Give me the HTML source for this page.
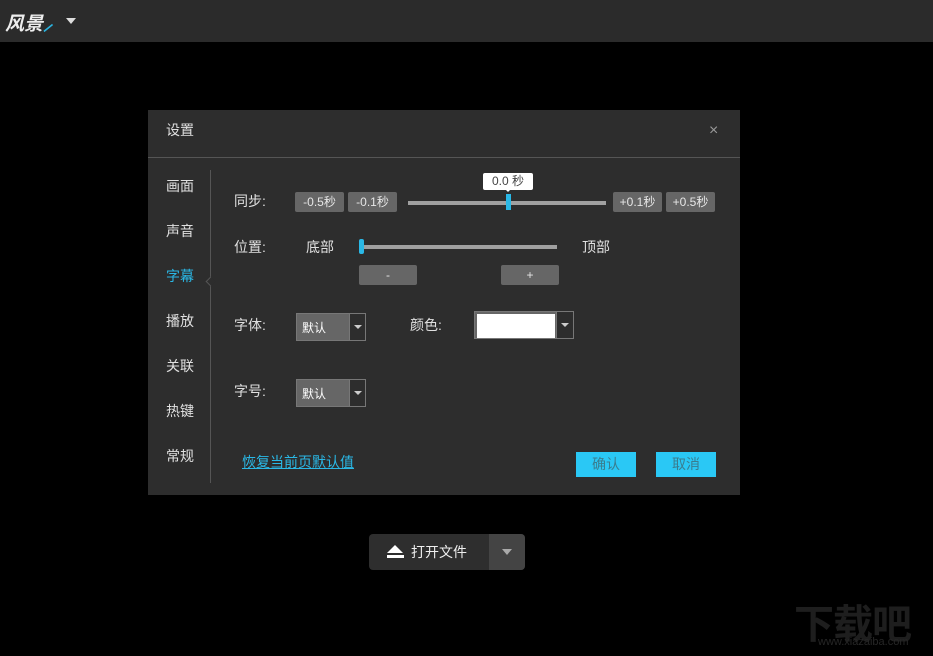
<!DOCTYPE html>
<html><head><meta charset="utf-8"><style>
*{margin:0;padding:0;box-sizing:border-box}
body{width:933px;height:656px;background:#000;position:relative;overflow:hidden;font-family:"Liberation Sans","Noto Sans CJK SC",sans-serif;font-size:14px;color:#ddd}
.a{position:absolute}
.top{left:0;top:0;width:933px;height:42px;background:#2b2b2b}
.dlg{left:148px;top:110px;width:592px;height:385px;background:#2d2d2d}
.btn{position:absolute;background:#666;color:#e6e6e6;font-size:12px;text-align:center;line-height:20px;height:20px;border-radius:2px}
.bar{position:absolute;height:4px;background:#a0a0a0}
.nav{position:absolute;left:166px;font-size:14px;color:#e0e0e0}
.lab{position:absolute;font-size:14px;color:#e0e0e0}
.sel{position:absolute;width:70px;height:28px;border:1px solid #777;background:#666}
.sel span{position:absolute;left:5px;top:5px;font-size:12px;color:#fff}
.sel i{position:absolute;right:0;top:0;width:16px;height:26px;background:#2d2d2d;border-left:1px solid #777}
.sel i:after{content:"";position:absolute;left:4px;top:11px;border:4px solid transparent;border-top:4px solid #ccc}
.ok{position:absolute;top:452px;width:60px;height:25px;background:#2ac8f5;color:#3a7d8f;text-align:center;line-height:24px;font-size:14px}
</style></head><body>
<div class="a top"></div>
<div class="a" style="left:5px;top:9px;font-size:19px;font-style:italic;font-weight:bold;color:#eee">风景<span style="color:#2ab4e0">⸝</span></div>
<div class="a" style="left:66px;top:18px;border:5px solid transparent;border-top:6px solid #ddd"></div>

<div class="a dlg"></div>
<div class="a" style="left:166px;top:120px;font-size:14px;color:#e0e0e0">设置</div>
<div class="a" style="left:709px;top:122px;font-size:16px;color:#999">×</div>
<div class="a" style="left:148px;top:157px;width:592px;height:1px;background:#555"></div>
<div class="a" style="left:210px;top:170px;width:1px;height:313px;background:#555"></div>
<div class="a" style="left:207px;top:278px;width:7px;height:7px;border-left:1px solid #555;border-bottom:1px solid #555;transform:rotate(45deg);background:#2d2d2d"></div>

<div class="nav" style="top:176px">画面</div>
<div class="nav" style="top:221px">声音</div>
<div class="nav" style="top:266px;color:#2ab8e6">字幕</div>
<div class="nav" style="top:311px">播放</div>
<div class="nav" style="top:356px">关联</div>
<div class="nav" style="top:401px">热键</div>
<div class="nav" style="top:446px">常规</div>

<div class="lab" style="left:234px;top:191px">同步:</div>
<div class="btn" style="left:295px;top:192px;width:49px">-0.5秒</div>
<div class="btn" style="left:348px;top:192px;width:49px">-0.1秒</div>
<div class="bar" style="left:408px;top:201px;width:198px"></div>
<div class="a" style="left:506px;top:194px;width:5px;height:16px;background:#2ab8e6"></div>
<div class="a" style="left:483px;top:173px;width:50px;height:17px;background:#fff;border-radius:2px;color:#444;font-size:12px;text-align:center;line-height:17px">0.0 秒</div>
<div class="a" style="left:505px;top:189px;border:3px solid transparent;border-top:3px solid #fff"></div>
<div class="btn" style="left:613px;top:192px;width:49px">+0.1秒</div>
<div class="btn" style="left:666px;top:192px;width:49px">+0.5秒</div>

<div class="lab" style="left:234px;top:237px">位置:</div>
<div class="lab" style="left:306px;top:237px">底部</div>
<div class="bar" style="left:360px;top:245px;width:197px"></div>
<div class="a" style="left:359px;top:239px;width:5px;height:15px;background:#2ab8e6;border-radius:2px"></div>
<div class="lab" style="left:582px;top:237px">顶部</div>
<div class="btn" style="left:359px;top:265px;width:58px">-</div>
<div class="btn" style="left:501px;top:265px;width:58px">+</div>

<div class="lab" style="left:234px;top:315px">字体:</div>
<div class="sel" style="left:296px;top:313px"><span>默认</span><i></i></div>
<div class="lab" style="left:410px;top:315px">颜色:</div>
<div class="a" style="left:474px;top:311px;width:100px;height:28px;border:1px solid #777;background:#666">
 <div class="a" style="left:2px;top:2px;width:78px;height:24px;background:#fff"></div>
 <div class="a" style="right:0;top:0;width:17px;height:26px;background:#2d2d2d;border-left:1px solid #777"></div>
 <div class="a" style="right:4px;top:11px;border:4px solid transparent;border-top:4px solid #ccc"></div>
</div>
<div class="lab" style="left:234px;top:381px">字号:</div>
<div class="sel" style="left:296px;top:379px"><span>默认</span><i></i></div>

<div class="a" style="left:242px;top:452px;font-size:14px;color:#2ab8e6;text-decoration:underline">恢复当前页默认值</div>
<div class="ok" style="left:576px">确认</div>
<div class="ok" style="left:656px">取消</div>

<div class="a" style="left:369px;top:534px;width:156px;height:36px;background:#2e2e2e;border-radius:4px"></div>
<div class="a" style="left:489px;top:534px;width:36px;height:36px;background:#444;border-radius:0 4px 4px 0"></div>
<div class="a" style="left:502px;top:549px;border:5px solid transparent;border-top:6px solid #aaa"></div>
<div class="a" style="left:387px;top:545px;border:8px solid transparent;border-bottom:8px solid #fff;border-top:0;width:0"></div>
<div class="a" style="left:387px;top:555px;width:17px;height:3px;background:#fff"></div>
<div class="a" style="left:411px;top:542px;font-size:14px;color:#eee">打开文件</div>

<div class="a" style="left:794px;top:592px;font-size:40px;font-weight:bold;color:#1e1e1e;letter-spacing:-1px">下载吧</div>
<div class="a" style="left:818px;top:636px;font-size:11px;color:#262626">www.xiazaiba.com</div>
</body></html>
